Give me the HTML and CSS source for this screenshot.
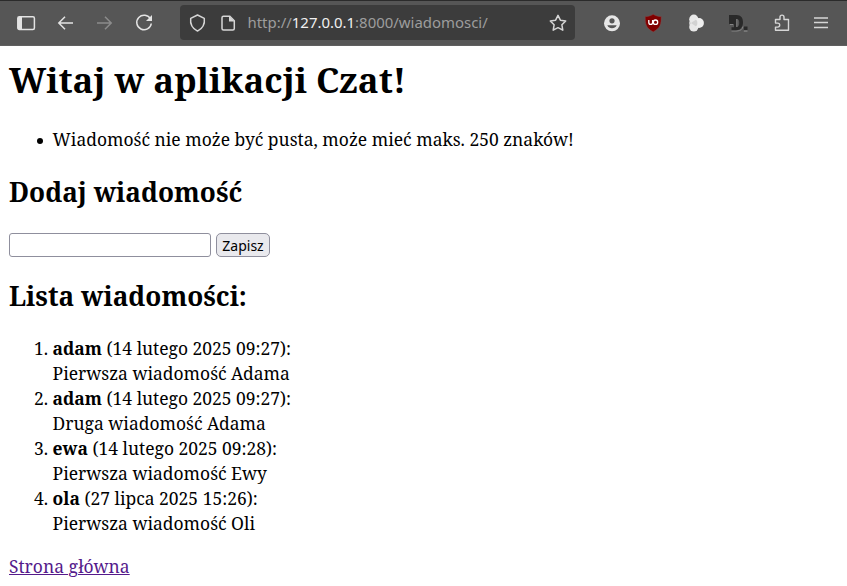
FILE: index.html
```html
<!DOCTYPE html>
<html lang="pl">
<head>
<meta charset="utf-8">
<title>Czat</title>
<link rel="stylesheet" href="styles.css">
</head>
<body>
<header class="toolbar">
  <nav class="nav">
    <svg class="icon" viewBox="0 0 24 24"><rect x="3.8" y="5.8" width="16.6" height="12.6" rx="1.5" fill="none" stroke="#e3e3e3" stroke-width="1.5"/><path d="M4 6h4v12H4z" fill="#e3e3e3"/></svg>
    <svg class="icon" viewBox="0 0 24 24"><path d="M20 12H5.800M12 5.700L5.800 12l6.200 6.300" fill="none" stroke="#e3e3e3" stroke-width="1.500"/></svg>
    <svg class="icon" viewBox="0 0 24 24"><path d="M4 12h14.200M12 5.700l6.200 6.300-6.200 6.300" fill="none" stroke="#8c8c8c" stroke-width="1.500"/></svg>
    <svg class="icon" viewBox="0 0 24 24"><path d="M18.500 8A7.300 7.300 0 1 0 19.300 12.500" fill="none" stroke="#e3e3e3" stroke-width="1.500"/><path d="M20 4v6h-6z" fill="#e3e3e3"/></svg>
  </nav>
  <div class="address">
    <svg class="icon shield" viewBox="0 0 24 24"><path d="M12.500 4l6.800 3.300c.6 4.700-1.500 10-6.800 12.800C7.200 17.300 5.100 12 5.700 7.300z" fill="none" stroke="#d6d6d6" stroke-width="1.500" stroke-linejoin="round"/></svg>
    <svg class="icon doc" viewBox="0 0 24 24"><path d="M7.500 5.200h6.300l4.500 4.500v7.800a1.500 1.500 0 0 1-1.500 1.500H7.500A1.500 1.500 0 0 1 6 17.500V6.700a1.500 1.500 0 0 1 1.500-1.500z" fill="none" stroke="#d6d6d6" stroke-width="1.500"/><path d="M13 5v5.500h5.500z" fill="#d6d6d6"/></svg>
    <span class="url">http://<b>127.0.0.1</b>:8000/wiadomosci/</span>
    <svg class="icon star" viewBox="0 0 24 24"><path d="M12 4.300l2.400 4.900 5.300.8-3.800 3.800.9 5.400-4.800-2.500-4.800 2.500.9-5.400L4.300 10l5.300-.8z" fill="none" stroke="#d6d6d6" stroke-width="1.500" stroke-linejoin="round"/></svg>
  </div>
  <div class="extensions">
    <svg class="icon" viewBox="0 0 24 24"><circle cx="12" cy="12.300" r="8" fill="#e6e6e6"/><circle cx="12" cy="9.800" r="2.600" fill="#565656"/><path d="M7.300 14.300h9.400c-1 2.200-2.600 3-4.700 3s-3.700-.8-4.700-3z" fill="#565656"/></svg>
    <svg class="icon" viewBox="0 0 24 24"><path d="M11.200 3.300c2.500 1.600 5 2.200 8 2.300 0 7-.4 11.500-8 15.300-7.600-3.800-8-8.300-8-15.300 3-.1 5.500-.7 8-2.300z" fill="#800000" stroke="#854b4b" stroke-width=".5"/><path d="M6.800 9v2.500a1.900 1.900 0 0 0 3.800 0V9" fill="none" stroke="#fff" stroke-width="1.300"/><circle cx="13.500" cy="11.200" r="2.200" fill="none" stroke="#fff" stroke-width="1.300"/></svg>
    <svg class="icon" viewBox="0 0 24 24"><circle cx="9.500" cy="12" r="4.400" fill="#d2d2d2"/><circle cx="9.800" cy="8.200" r="4.600" fill="#e8e8e8"/><circle cx="9.800" cy="16" r="4.600" fill="#e8e8e8"/><circle cx="15" cy="12" r="4.900" fill="#eee"/><path d="M12 8.500a5 5 0 0 1 0 7L7 12z" fill="#d2d2d2"/></svg>
    <svg class="icon" viewBox="0 0 24 24"><path d="M5 13.500h3M6.500 20h5.500c3.500 0 5.500-2 6-4.500" fill="none" stroke="#858585"/><path d="M4 4h7.500c4.500 0 6.500 3 6.500 7.300 0 4.700-2.500 8-7 8H6.500v-3H9V13H4zm7.500 4v8c2 0 2.800-1.800 2.800-4.200S13.500 8 11.500 8z" fill="#292929" fill-rule="evenodd"/><path d="M11.800 8v8" stroke="#858585"/><path d="M18.800 15.500h3.700v3.800h-3.700z" fill="#292929"/><path d="M18.800 20h3.700" stroke="#999"/></svg>
    <svg class="icon puzzle" viewBox="0 0 24 24"><path d="M6.500 11V8.500H11V6.100a2 2 0 0 1 4 0v2.400h4.500v10.800h-13v-3.200h2.200a2 2 0 0 0 0-4H6.500z" fill="none" stroke="#d6d6d6" stroke-width="1.400" stroke-linejoin="round"/></svg>
    <svg class="icon menu" viewBox="0 0 24 24"><path d="M5 7h14M5 11.500h14M5 16.500h14" stroke="#d6d6d6" stroke-width="1.400"/></svg>
  </div>
</header>
<main class="page">
  <h1>Witaj w aplikacji Czat!</h1>
  <ul class="errors"><li>Wiadomość nie może być pusta, może mieć maks. 250 znaków!</li></ul>
  <h2 class="add">Dodaj wiadomość</h2>
  <form class="form"><input class="field" type="text"><button class="save" type="button">Zapisz</button></form>
  <h2 class="list-title">Lista wiadomości:</h2>
  <ol class="messages">
    <li><b>adam</b> (14 lutego 2025 09:27):<br>Pierwsza wiadomość Adama</li>
    <li><b>adam</b> (14 lutego 2025 09:27):<br>Druga wiadomość Adama</li>
    <li><b>ewa</b> (14 lutego 2025 09:28):<br>Pierwsza wiadomość Ewy</li>
    <li><b>ola</b> (27 lipca 2025 15:26):<br>Pierwsza wiadomość Oli</li>
  </ol>
  <p class="home"><a href="#">Strona główna</a></p>
</main>
</body>
</html>
```
FILE: styles.css
```css
* { box-sizing: border-box; }
html, body { margin: 0; height: 586px; overflow: hidden; background: #fff; }
body { color: #000; font-family: "Noto Serif", "DejaVu Serif Condensed", "DejaVu Serif", serif; font-size: 17.450px; line-height: 25px; }
.toolbar { display: flex; height: 46px; background: #565656; border-top: 1px solid #2b2b2b; border-bottom: 1px solid #606060; }
.icon { display: block; width: 24px; height: 24px; flex: none; }
.nav { display: flex; width: 180px; padding: 10px 0 0 14px; gap: 15.300px; }
.address { display: flex; width: 395px; height: 35px; margin-top: 4px; padding: 6px 5px 0 5px; background: #3c3c3c; border-radius: 4px; }
.doc { margin-left: 7px; }
.url { flex: 1; margin-left: 7.500px; color: #9d9d9d; font: 14.950px/23px "Noto Sans", sans-serif; white-space: nowrap; }
.url b { color: #f0f0f0; font-weight: 400; }
.extensions { display: flex; padding: 10px 0 0 25px; gap: 17.800px; }
.puzzle { margin-left: 2.300px; }
.menu { margin-left: -2.300px; }
.page { padding: 10px 9px 0; }
h1 { margin: 0 0 23px; font-size: 34.850px; line-height: 48px; }
h2 { margin: 0; font-size: 26.180px; line-height: 36px; }
ul, ol { margin: 0; padding-left: 43.600px; }
.errors { list-style: none; }
.errors li { display: flex; align-items: center; }
.errors li::before { content: ""; flex: none; width: 6px; height: 6px; margin: 2px 9.400px 0 -15.400px; border-radius: 50%; background: #000; }
.add { margin-top: 22px; }
.form { display: flex; gap: 5px; margin-top: 23px; }
.field { width: 202px; height: 24px; border: 1px solid #8f8f9d; border-radius: 3px; background: #fff; }
.save { width: 54px; height: 24px; padding: 1px 0 0; border: 1px solid #8f8f9d; border-radius: 5px; background: #e9e9ed; color: #000; font: 14px/21px "Noto Sans", sans-serif; }
.list-title { margin-top: 21px; }
.messages { margin-top: 22px; }
.home { margin: 18px 0 0; }
.home a { color: #551a8b; text-decoration-thickness: 1px; }
```
